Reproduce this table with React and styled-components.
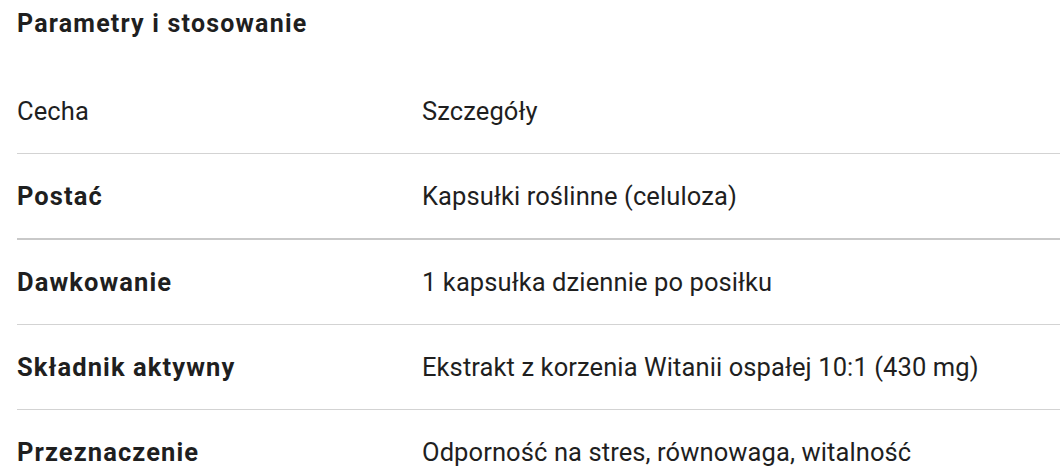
import React from 'react';
import styled, { createGlobalStyle } from 'styled-components';

const GlobalStyle = createGlobalStyle`
  body {
    margin: 0;
    background: #ffffff;
    font-family: Roboto, "Noto Sans", sans-serif;
    color: #1f1f1f;
  }
`;

const Container = styled.div`
  padding: 9px 0 0 17px;
`;

const Title = styled.h2`
  margin: 0;
  font-size: 25px;
  font-weight: 700;
  line-height: 30px;
  letter-spacing: 1.2px;
  color: #1f1f1f;
`;

const Table = styled.div`
  margin-top: 30px;
  display: flex;
  flex-direction: column;
`;

const Row = styled.div`
  display: grid;
  grid-template-columns: 405px 1fr;
  height: 84px;
  align-items: center;
  border-bottom: ${props => (props.thick ? '2px solid #c9c9c9' : '1px solid #d3d3d3')};
  &:last-child {
    border-bottom: none;
  }
`;

const Cell = styled.div`
  font-size: 25.5px;
  font-weight: ${props => (props.bold ? 700 : 400)};
  letter-spacing: ${props => (props.bold ? '1.1px' : '0.1px')};
  color: #1f1f1f;
  white-space: nowrap;
`;

const rows = [
  { label: 'Postać', value: 'Kapsułki roślinne (celuloza)', thick: true },
  { label: 'Dawkowanie', value: '1 kapsułka dziennie po posiłku' },
  { label: 'Składnik aktywny', value: 'Ekstrakt z korzenia Witanii ospałej 10:1 (430 mg)' },
  { label: 'Przeznaczenie', value: 'Odporność na stres, równowaga, witalność' },
];

export default function App() {
  return (
    <>
      <GlobalStyle />
      <Container>
        <Title>Parametry i stosowanie</Title>
        <Table>
          <Row>
            <Cell>Cecha</Cell>
            <Cell>Szczegóły</Cell>
          </Row>
          {rows.map(row => (
            <Row key={row.label} thick={row.thick}>
              <Cell bold>{row.label}</Cell>
              <Cell>{row.value}</Cell>
            </Row>
          ))}
        </Table>
      </Container>
    </>
  );
}
